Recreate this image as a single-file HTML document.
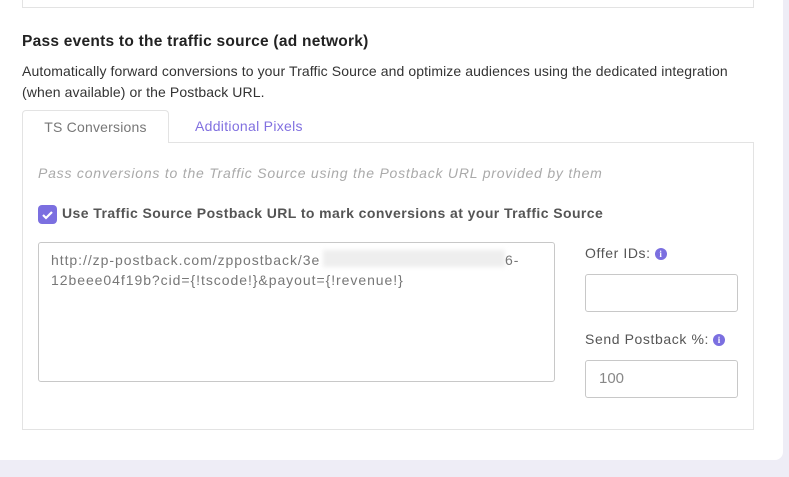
<!DOCTYPE html>
<html><head><style>
body{margin:0;width:789px;height:477px;background:#eeedf6;font-family:"Liberation Sans",sans-serif;position:relative;overflow:hidden;color:#333}
.card{position:absolute;left:0;top:-10px;width:783px;height:470px;background:#fff;border-radius:0 0 8px 0}
.a{position:absolute}
.top{left:22px;top:-10px;width:730px;height:17px;border:1px solid #e3e3e3;border-top:none}
h1{position:absolute;left:22px;top:33px;margin:0;font-size:15.5px;font-weight:bold;color:#222;letter-spacing:0.25px}
.desc{left:22px;top:61px;font-size:14px;line-height:21px;color:#333;width:735px;letter-spacing:0.1px}
.tab{left:22px;top:110px;width:145px;height:32px;border:1px solid #e3e3e3;border-bottom:none;border-radius:4px 4px 0 0;background:#fff;z-index:2;font-size:14px;color:#777;text-align:center;line-height:32px;letter-spacing:0.2px}
.tab2{left:195px;top:110px;font-size:14px;color:#8170e0;line-height:32px;letter-spacing:0.3px}
.panel{left:22px;top:142px;width:730px;height:286px;border:1px solid #e3e3e3}
.it{left:38px;top:165px;font-size:14px;font-style:italic;color:#aaa;letter-spacing:0.78px}
.cb{left:38px;top:205px;width:19px;height:19px;background:#7b6fe0;border-radius:4px}
.cbl{left:62px;top:205px;font-size:14px;font-weight:bold;color:#555;letter-spacing:0.42px}
.ta{left:38px;top:242px;width:515px;height:138px;border:1px solid #c8c8c8;border-radius:3px}
.tat{left:51px;top:250px;font-size:14px;line-height:20px;color:#777;letter-spacing:0.95px}
.blur{left:323px;top:250px;width:182px;height:17px;background:#eee;filter:blur(2px)}
.lbl{left:585px;font-size:14px;color:#555;letter-spacing:0.6px}
.inp{left:585px;width:151px;height:36px;border:1px solid #c8c8c8;border-radius:3px}
.i{display:inline-block;width:12px;height:12px;border-radius:50%;background:#7b6fe0;color:#fff;font-size:9px;font-weight:bold;text-align:center;line-height:12px;font-family:"Liberation Serif",serif;vertical-align:1px;margin-left:4px;letter-spacing:0}
</style></head><body>
<div class="card"></div>
<div class="a top"></div>
<h1>Pass events to the traffic source (ad network)</h1>
<div class="a desc">Automatically forward conversions to your Traffic Source and optimize audiences using the dedicated integration<br>(when available) or the Postback URL.</div>
<div class="a panel"></div>
<div class="a tab">TS Conversions</div>
<div class="a tab2">Additional Pixels</div>
<div class="a it">Pass conversions to the Traffic Source using the Postback URL provided by them</div>
<div class="a cb"><svg width="19" height="19"><path d="M5 10l3 3 6-6" stroke="#fff" stroke-width="2.2" fill="none"/></svg></div>
<div class="a cbl">Use Traffic Source Postback URL to mark conversions at your Traffic Source</div>
<div class="a ta"></div>
<div class="a tat">http://zp-postback.com/zppostback/3e<br>12beee04f19b?cid={!tscode!}&amp;payout={!revenue!}</div>
<div class="a blur"></div>
<div class="a tat" style="left:505px">6-</div>
<div class="a lbl" style="top:245px">Offer IDs:<span class="i">i</span></div>
<div class="a inp" style="top:274px"></div>
<div class="a lbl" style="top:331px">Send Postback %:<span class="i">i</span></div>
<div class="a inp" style="top:360px"><span style="position:absolute;left:13px;top:9px;font-size:15px;color:#888">100</span></div>
</body></html>
